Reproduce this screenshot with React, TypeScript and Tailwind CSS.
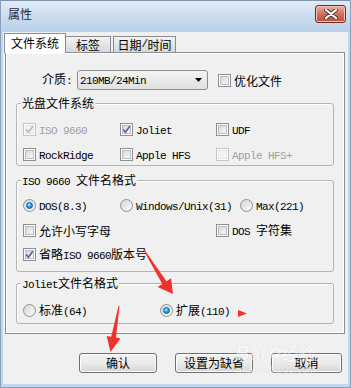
import React from "react";

const cjkRe = /([\u3000-\u9fff\uff00-\uffef]+)/;

// mixed SimSun-like text: CJK at 12px, latin in half-width mono
function T({ text }: { text: string }) {
  const parts = text.split(cjkRe).filter((p) => p !== "");
  return (
    <>
      {parts.map((p, i) =>
        cjkRe.test(p) ? (
          <span key={i} className="font-['Noto_Sans_CJK_SC',sans-serif] text-[12px]">
            {p}
          </span>
        ) : (
          <span key={i} className="font-['Liberation_Mono',monospace] text-[11px] tracking-[-0.6px] whitespace-pre">
            {p}
          </span>
        )
      )}
    </>
  );
}

function Check({ label, checked = false, disabled = false }: { label: string; checked?: boolean; disabled?: boolean }) {
  return (
    <div className="flex h-[13px] items-center gap-[3px] leading-[13px]">
      <div
        className={
          "flex h-[13px] w-[13px] shrink-0 items-center justify-center border bg-white p-[1px] " +
          (disabled ? "border-[#c5c5c5]" : "border-[#8e8f8f]")
        }
      >
        <div
          className={
            "relative h-full w-full border " +
            (disabled
              ? "border-[#e3e3e3] bg-[#f4f4f4]"
              : "border-[#b9bcc0] bg-gradient-to-br from-[#d6d9dd] to-[#f7f7f7]")
          }
        >
          {checked && (
            <svg viewBox="0 0 9 9" className="absolute -left-[1px] -top-[1px] h-[9px] w-[9px]">
              <path
                d="M1.2 4.6 L3.4 7.2 L7.8 1.2"
                fill="none"
                stroke={disabled ? "#b8b8b8" : "#4c61a0"}
                strokeWidth="1.6"
              />
            </svg>
          )}
        </div>
      </div>
      <span className={disabled ? "text-[#a0a0a0]" : "text-black"}>
        <T text={label} />
      </span>
    </div>
  );
}

function Radio({ label, checked = false }: { label: string; checked?: boolean }) {
  return (
    <div className="flex h-[13px] items-center gap-[3px] leading-[13px]">
      <div className="flex h-[13px] w-[13px] shrink-0 items-center justify-center rounded-full border border-[#8e8f8f] bg-gradient-to-br from-[#d3d6da] to-[#fbfbfb]">
        {checked && (
          <div className="h-[7px] w-[7px] rounded-full border border-[#1a5f93] bg-[radial-gradient(circle_at_40%_35%,#b9ecff_0%,#2aa3ec_45%,#0a5fa3_100%)]" />
        )}
      </div>
      <span className="text-black">
        <T text={label} />
      </span>
    </div>
  );
}

function Group({ title, className, children }: { title: string; className: string; children: React.ReactNode }) {
  return (
    <div className={"relative rounded-[3px] border border-[#b4b4b4] shadow-[inset_1px_1px_0_#fff] " + className}>
      <span className="absolute -top-[8px] left-[4px] bg-[#f0f0f0] px-[1px] leading-[13px] text-black">
        <T text={title} />
      </span>
      {children}
    </div>
  );
}

function Button({ label, w }: { label: string; w: string }) {
  return (
    <div
      className={
        "flex h-[20px] items-center justify-center rounded-[3px] border border-[#707070] bg-gradient-to-b from-[#f2f2f2] via-[#ebebeb] to-[#d5d5d5] shadow-[inset_0_0_0_1px_#fcfcfc] leading-none text-black " +
        w
      }
    >
      <T text={label} />
    </div>
  );
}

export default function App() {
  return (
    <div className="relative h-[388px] w-[351px] overflow-hidden border-x border-b border-[#8aa0b8] bg-[#f0f0f0] font-['Noto_Sans_CJK_SC',sans-serif] text-[12px] text-black">
      {/* title bar */}
      <div className="flex h-[32px] items-start justify-between border-t border-[#7f93a9] bg-gradient-to-b from-[#e2ebf6] via-[#cbdcef] to-[#b9d0ea] pl-[7px] pr-[4px]">
        <span className="mt-[5px] text-[12px] leading-[16px] text-[#1e2a38]">属性</span>
        <div className="mt-[4px] flex h-[18px] w-[31px] items-center justify-center rounded-[3px] border border-[#6e2a22] bg-gradient-to-b from-[#eab0a4] via-[#d2705c] to-[#c04a32] shadow-[inset_0_0_0_1px_#f3c5bb]">
          <svg viewBox="0 0 14 10" className="h-[10px] w-[14px]">
            <path d="M2 1 L12 9 M12 1 L2 9" stroke="#3b3b3b" strokeWidth="4" strokeLinecap="round" />
            <path d="M2 1 L12 9 M12 1 L2 9" stroke="#ffffff" strokeWidth="2.2" strokeLinecap="round" />
          </svg>
        </div>
      </div>

      {/* body */}
      <div className="flex h-[355px] flex-col border-x-2 border-b-[3px] border-[#c4d6ec] pl-[2px] pr-[3px]">
        {/* tabs */}
        <div className="relative z-10 -mb-px mt-[1px] flex h-[20px] items-end">
          <div className="-ml-px flex h-[20px] w-[62px] items-start justify-center border-x border-t border-[#898c95] bg-white pt-[1px] leading-[16px]">
            <T text="文件系统" />
          </div>
          <div className="mb-px flex h-[16px] w-[45px] items-center justify-center border-r border-t border-[#898c95] bg-gradient-to-b from-[#f3f3f3] to-[#d8d8d8] leading-none">
            <T text="标签" />
          </div>
          <div className="mb-px ml-[2px] flex h-[16px] w-[63px] items-center justify-center border-x border-t border-[#898c95] bg-gradient-to-b from-[#f3f3f3] to-[#d8d8d8] leading-none">
            <T text="日期/时间" />
          </div>
        </div>

        {/* tab panel */}
        <div className="flex w-[340px] flex-col border border-[#898c95] bg-[#f0f0f0] px-[10px] pb-[9px] pt-[17px] shadow-[inset_1px_1px_0_#fff,inset_-1px_-1px_0_#fff]">
          <div className="flex h-[20px] items-center pl-[26px]">
            <span className="leading-none">
              <T text="介质:" />
            </span>
            <div className="ml-[5px] flex h-[20px] w-[131px] items-center justify-between rounded-[3px] border border-[#8d8d8d] bg-gradient-to-b from-[#f4f4f4] to-[#e0e0e0] pl-[2px] pr-[5px]">
              <span className="leading-none">
                <T text="210MB/24Min" />
              </span>
              <svg viewBox="0 0 7 4" className="h-[4px] w-[7px]">
                <path d="M0 0 H7 L3.5 4 Z" fill="#000" />
              </svg>
            </div>
            <div className="ml-[10px]">
              <Check label="优化文件" />
            </div>
          </div>

          <Group title="光盘文件系统" className="mt-[13px] flex flex-col gap-[12px] pb-[4px] pl-[6px] pt-[19px]">
            <div className="flex">
              <div className="w-[97px]"><Check label="ISO 9660" checked disabled /></div>
              <div className="w-[96px]"><Check label="Joliet" checked /></div>
              <Check label="UDF" />
            </div>
            <div className="flex">
              <div className="w-[97px]"><Check label="RockRidge" /></div>
              <div className="w-[96px]"><Check label="Apple HFS" /></div>
              <Check label="Apple HFS+" disabled />
            </div>
          </Group>

          <Group title="ISO 9660 文件名格式" className="mt-[14px] flex flex-col pb-[10px] pl-[6px] pt-[18px]">
            <div className="flex">
              <div className="w-[97px]"><Radio label="DOS(8.3)" checked /></div>
              <div className="w-[120px]"><Radio label="Windows/Unix(31)" /></div>
              <Radio label="Max(221)" />
            </div>
            <div className="mt-[12px] flex">
              <div className="w-[193px]"><Check label="允许小写字母" /></div>
              <Check label="DOS 字符集" />
            </div>
            <div className="mt-[11px] flex">
              <Check label="省略ISO 9660版本号" checked />
            </div>
          </Group>

          <Group title="Joliet文件名格式" className="mt-[11px] flex pb-[6px] pl-[6px] pt-[20px]">
            <div className="w-[137px]"><Radio label="标准(64)" /></div>
            <Radio label="扩展(110)" checked />
          </Group>
        </div>

        {/* buttons */}
        <div className="mt-[19px] flex gap-[18px] pl-[74px]">
          <Button label="确认" w="w-[78px]" />
          <Button label="设置为缺省" w="w-[78px]" />
          <Button label="取消" w="w-[71px]" />
        </div>
      </div>

      {/* faint watermark */}
      <div className="pointer-events-none absolute left-[234px] top-[342px] flex flex-col items-start text-white opacity-45 [text-shadow:0_0_1px_#b0b0b0]">
        <div className="flex items-end gap-[1px] font-['Liberation_Sans',sans-serif] text-[20px] font-bold italic leading-[22px]">
          <span>Bai</span>
          <span className="text-[16px]">✿</span>
          <span className="font-['Noto_Sans_CJK_SC',sans-serif] text-[17px] not-italic">经验</span>
        </div>
        <span className="font-['Liberation_Sans',sans-serif] text-[10px] leading-[12px]">jingyan.baidu.com</span>
      </div>

      {/* red annotation arrows */}
      <svg className="pointer-events-none absolute left-0 top-0 h-[388px] w-[351px]" viewBox="0 0 351 388">
        <polygon points="143.4,249.7 142.6,250.3 161.3,284 156.7,286.9 172,294 170.1,278.3 165.5,281.3" fill="#f2312c" />
        <polygon points="118.5,306 117.5,306 110.2,336.8 105.7,336 109.5,352 119.5,338.4 115,337.6" fill="#f2312c" />
        <polygon points="237,310 246,313.5 237,317" fill="#f2312c" />
      </svg>
    </div>
  );
}
